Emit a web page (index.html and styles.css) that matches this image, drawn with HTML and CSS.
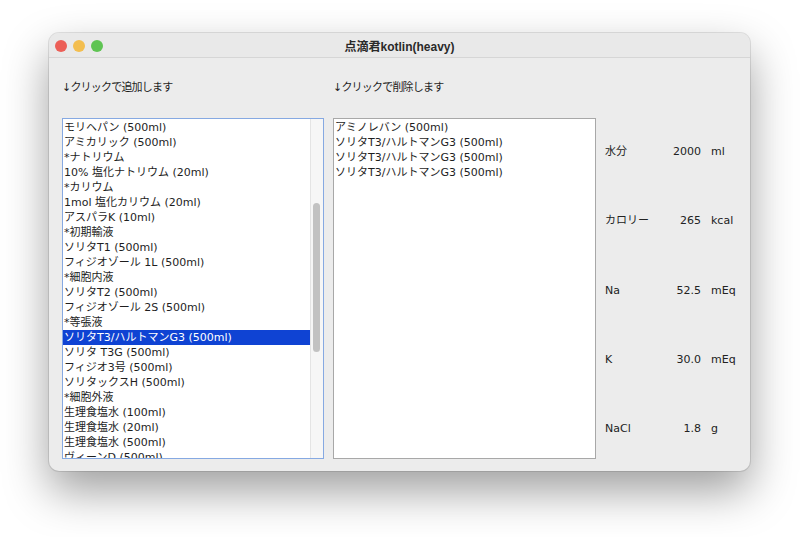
FILE: index.html
```html
<!DOCTYPE html>
<html lang="ja">
<head>
<meta charset="utf-8">
<title>点滴君kotlin(heavy)</title>
<link rel="stylesheet" href="styles.css">
</head>
<body>
<div class="window">
  <div class="titlebar">
    <div class="lights">
      <span class="light red"></span>
      <span class="light yellow"></span>
      <span class="light green"></span>
    </div>
    <div class="title">点滴君kotlin(heavy)</div>
    <div></div>
  </div>
  <div class="content">
    <div class="caption">↓クリックで追加します</div>
    <div class="caption">↓クリックで削除します</div>
    <div></div>
    <div class="list list-focus">
      <div class="items">
        <div class="item">モリヘパン (500ml)</div>
        <div class="item">アミカリック (500ml)</div>
        <div class="item">*ナトリウム</div>
        <div class="item">10% 塩化ナトリウム (20ml)</div>
        <div class="item">*カリウム</div>
        <div class="item">1mol 塩化カリウム (20ml)</div>
        <div class="item">アスパラK (10ml)</div>
        <div class="item">*初期輸液</div>
        <div class="item">ソリタT1 (500ml)</div>
        <div class="item">フィジオゾール 1L (500ml)</div>
        <div class="item">*細胞内液</div>
        <div class="item">ソリタT2 (500ml)</div>
        <div class="item">フィジオゾール 2S (500ml)</div>
        <div class="item">*等張液</div>
        <div class="item selected">ソリタT3/ハルトマンG3 (500ml)</div>
        <div class="item">ソリタ T3G (500ml)</div>
        <div class="item">フィジオ3号 (500ml)</div>
        <div class="item">ソリタックスH (500ml)</div>
        <div class="item">*細胞外液</div>
        <div class="item">生理食塩水 (100ml)</div>
        <div class="item">生理食塩水 (20ml)</div>
        <div class="item">生理食塩水 (500ml)</div>
        <div class="item">ヴィーンD (500ml)</div>
      </div>
      <div class="scrollbar"><div class="thumb"></div></div>
    </div>
    <div class="list list-plain">
      <div class="items">
        <div class="item">アミノレバン (500ml)</div>
        <div class="item">ソリタT3/ハルトマンG3 (500ml)</div>
        <div class="item">ソリタT3/ハルトマンG3 (500ml)</div>
        <div class="item">ソリタT3/ハルトマンG3 (500ml)</div>
      </div>
    </div>
    <div class="stats">
      <div class="s-label">水分</div><div class="s-value">2000</div><div class="s-unit">ml</div>
      <div class="s-label">カロリー</div><div class="s-value">265</div><div class="s-unit">kcal</div>
      <div class="s-label">Na</div><div class="s-value">52.5</div><div class="s-unit">mEq</div>
      <div class="s-label">K</div><div class="s-value">30.0</div><div class="s-unit">mEq</div>
      <div class="s-label">NaCl</div><div class="s-value">1.8</div><div class="s-unit">g</div>
    </div>
  </div>
</div>
</body>
</html>
```

FILE: styles.css
```css
* { box-sizing: border-box; }

html, body {
  margin: 0;
  padding: 0;
  background: #ffffff;
  height: 100%;
}

body {
  padding: 33px 0 0 49px;
  font-family: "DejaVu Sans", "Noto Sans CJK JP", sans-serif;
  font-size: 11px;
  color: #1e1e1e;
  overflow: hidden;
}

.window {
  width: 701px;
  height: 438px;
  background: #ececec;
  border-radius: 10px;
  box-shadow: 0 0 0 1px rgba(0,0,0,0.10), 0 20px 45px rgba(0,0,0,0.38);
  overflow: hidden;
  display: flex;
  flex-direction: column;
}

.titlebar {
  height: 25px;
  flex: none;
  display: grid;
  grid-template-columns: 1fr auto 1fr;
  align-items: center;
  background: #e9e9e9;
  border-bottom: 1px solid #d6d6d6;
}

.lights {
  display: flex;
  gap: 6px;
  padding-left: 6px;
  padding-top: 1px;
}

.light {
  width: 12px;
  height: 12px;
  border-radius: 50%;
}
.red { background: #ec5f57; }
.yellow { background: #f3be4f; }
.green { background: #5fc453; }

.title {
  font-family: "Liberation Sans", "Noto Sans CJK JP", sans-serif;
  font-weight: bold;
  font-size: 12px;
  color: #2a2a2a;
  padding-top: 1px;
}

.content {
  flex: 1;
  display: grid;
  grid-template-columns: 262px 263px 1fr;
  grid-template-rows: 15px 341px;
  column-gap: 9px;
  row-gap: 23px;
  padding: 22px 0 0 13px;
}

.caption {
  line-height: 15px;
  white-space: nowrap;
  letter-spacing: -0.8px;
}

.list {
  background: #ffffff;
  overflow: hidden;
  display: flex;
}
.list-focus { border: 1px solid #86a9e2; }
.list-plain { border: 1px solid #a8a8a8; }

.items {
  flex: 1;
  padding-top: 1px;
  overflow: hidden;
}

.item {
  height: 15px;
  line-height: 15px;
  padding-left: 1px;
  white-space: nowrap;
}

.item.selected {
  background: #0f43d3;
  color: #ffffff;
}

.scrollbar {
  width: 13px;
  flex: none;
  background: #f6f6f6;
  border-left: 1px solid #e4e4e4;
  padding: 84px 0 0 2px;
}

.thumb {
  width: 7px;
  height: 149px;
  border-radius: 4px;
  background: #c2c2c2;
}

.stats {
  display: grid;
  grid-template-columns: 60px 36px auto;
  grid-auto-rows: 15px;
  row-gap: 54.25px;
  align-content: start;
  padding-top: 26px;
  line-height: 15px;
  color: #222;
}

.s-value { text-align: right; }
.s-unit { padding-left: 10px; }
```
